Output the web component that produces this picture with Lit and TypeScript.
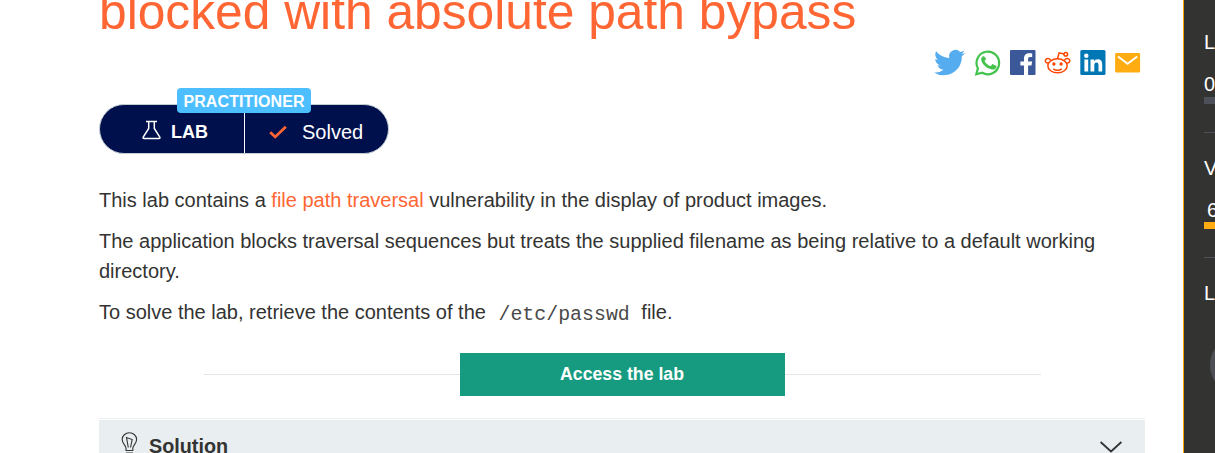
import { LitElement, html, css } from "lit";
import { customElement } from "lit/decorators.js";

@customElement("social-links")
class SocialLinks extends LitElement {
  static styles = css`
    :host { display: flex; justify-content: flex-end; gap: 9px; height: 26px; padding-right: 4px; }
    .icon { display: block; width: 26px; height: 26px; overflow: visible; }
    .bird { width: 31px; margin-right: 1px; }
  `;
  render() {
    return html`
      <svg class="icon bird" viewBox="0 0 31 26"><path fill="#55acee" d="M31 3.100c-1.100.5-2.400.8-3.600 1 1.300-.8 2.300-2 2.800-3.500-1.200.7-2.600 1.200-4 1.500A6.350 6.350 0 0 0 15.300 7.900C10 7.600 5.300 5.100 2.200 1.200c-1.700 2.900-.8 6.600 2 8.500-1 0-2-.3-2.900-.8 0 3.100 2.200 5.700 5.100 6.300-.9.300-1.900.3-2.900.1.800 2.500 3.200 4.400 6 4.400A12.800 12.800 0 0 1 0 22.400 18 18 0 0 0 9.700 25.200C21.600 25.200 28.300 15.200 27.800 6.300 29.100 5.500 30.200 4.400 31 3.100z"/></svg>
      <svg class="icon" viewBox="0 0 26 26"><path fill="none" stroke="#43c24c" stroke-width="2.200" d="M1.300 24.300l1.600-6A11.300 11.300 0 1 1 7.200 22.700z"/><path fill="#43c24c" d="M9.500 6.900c-.3-.6-.6-.6-1-.6-.9 0-2.300 1.200-2.300 3.100 0 1.500 1 3.100 1.300 3.500.3.500 2.700 4.200 6.500 5.700 3.200 1.200 3.900 1 4.600.9.700 0 2.300-.9 2.600-1.800.3-.9.300-1.600.2-1.800-.1-.2-.4-.3-.9-.5l-2.600-1.200c-.4-.1-.7-.2-.9.2l-1.200 1.500c-.2.300-.5.300-.8.100-.4-.2-1.700-.6-3.100-2-1.200-1-1.900-2.300-2.200-2.700-.2-.4 0-.6.2-.8l.6-.7c.2-.2.300-.4.400-.6.100-.3.100-.5 0-.7z"/></svg>
      <svg class="icon" viewBox="0 0 26 26"><rect width="25.500" height="25" rx="1" fill="#3b5998"/><path fill="#fff" d="M14 25V15.500h-3.600v-3.900H14V8.500c0-3.400 2.200-5.200 5.200-5.200 1.400 0 2.700.1 3 .2V7h-2.100c-1.700 0-2 .8-2 1.900v2.700h4l-.6 3.900h-3.400V25z"/></svg>
      <svg class="icon" viewBox="0 0 26 26"><g fill="none" stroke="#ff4500" stroke-width="1.500"><ellipse cx="12.500" cy="15.800" rx="9.700" ry="7"/><path d="M12.500 8.800l1.600-6 5 1.200M3.500 12.900C1.300 13.500-.2 11.500.5 9.900c1-1.900 3.800-1.800 5 .1M21.500 12.900c2.200.6 4-1.400 3.100-3-1-1.900-3.800-1.800-5 .1M8.300 18.800c2.300 1.800 6.100 1.800 8.400 0"/><circle cx="20.800" cy="4.200" r="1.800"/></g><g fill="#ff4500"><circle cx="8.900" cy="14" r="1.700"/><circle cx="16.100" cy="14" r="1.700"/></g></svg>
      <svg class="icon" viewBox="0 0 26 26"><rect width="25.200" height="25" x=".3" rx="1.500" fill="#0077b5"/><g fill="#fff"><circle cx="6.300" cy="5.800" r="2.200"/><path d="M4.400 9.500h3.800v12H4.400zM10.500 9.500h3.600v1.700c.7-1.200 1.900-2 3.600-2 3.700 0 4.500 2.300 4.500 5.600v6.700h-3.700v-5.900c0-1.500-.1-3.200-2-3.200s-2.200 1.500-2.200 3.100v6h-3.800z"/></g></svg>
      <svg class="icon" viewBox="0 0 26 26"><rect x=".1" y="3" width="25" height="19.500" rx="1.300" fill="#ffac12"/><path fill="none" stroke="#fff" stroke-width="2" d="M3 6.500l9.600 7.300 9.600-7.300"/></svg>
    `;
  }
}

@customElement("lab-status")
class LabStatus extends LitElement {
  static styles = css`
    :host { display: block; position: relative; width: 289.500px; height: 49px; color: #fff; }
    .pill { display: flex; box-sizing: border-box; height: 49.500px; border: 1px solid #c3cdd2; border-radius: 25px; background: #00104d; overflow: hidden; }
    .half { display: flex; align-items: center; }
    .lab { width: 145px; box-sizing: border-box; padding: 6px 0 0 42px; border-right: 1px solid #fff; font-size: 18px; font-weight: 700; }
    .lab svg { width: 19px; height: 20px; margin: -3px 10px 0 0; }
    .solved { padding: 6px 0 0 24px; font-size: 20px; }
    .solved svg { width: 18px; height: 14px; margin: 0 15px 0 0; }
    .level { position: absolute; left: 78px; top: -16px; width: 134px; height: 25px; border-radius: 4px; background: #4dbeff; font-size: 16px; letter-spacing: .1px; line-height: 27px; font-weight: 700; text-align: center; white-space: nowrap; }
  `;
  render() {
    return html`
      <div class="pill">
        <div class="half lab"><svg viewBox="0 0 19 20" fill="none" stroke="#fff" stroke-width="1.500"><path d="M4 1.500h11M6.700 2v6.500L1.200 17.200c-.4.700 0 1.400.8 1.400h15c.8 0 1.200-.7.800-1.400L12.300 8.500V2"/></svg>LAB</div>
        <div class="half solved"><svg viewBox="0 0 18 14" fill="none" stroke="#ff6633" stroke-width="2.800"><path d="M1.200 7.200l5 4.700L16.800 1.700"/></svg>Solved</div>
      </div>
      <span class="level">PRACTITIONER</span>
    `;
  }
}

@customElement("progress-rail")
class ProgressRail extends LitElement {
  static styles = css`
    :host { display: block; box-sizing: border-box; width: 32px; height: 453px; padding: 30px 0 0 20px; border-left: 1px solid #ffa500; background: #333332; color: #fff; font-size: 20px; line-height: 24px; overflow: hidden; }
    .block { box-sizing: border-box; height: 125px; white-space: nowrap; }
    .first { height: 126px; }
    .value { padding-top: 18px; height: 24px; }
    .inset { padding-left: 3px; }
    .bar { height: 7px; margin-top: 1px; background: #4d4f59; }
    .full { background: #ffac12; margin-top: 0; }
    .rule { height: 1px; margin-top: 28px; background: #4d4f59; }
    .badge { width: 60px; height: 60px; margin: 30px 0 0 6px; border-radius: 50%; background: #4d4f54; }
  `;
  render() {
    return html`
      <div class="block first"><div>L</div><div class="value">0</div><div class="bar"></div><div class="rule"></div></div>
      <div class="block"><div>V</div><div class="value inset">6</div><div class="bar full"></div><div class="rule"></div></div>
      <div>L</div><div class="badge"></div>
    `;
  }
}

@customElement("app-root")
class AppRoot extends LitElement {
  static styles = css`
    :host { display: flex; width: 1215px; height: 453px; overflow: hidden; background: #fff; color: #333332; font-family: "Liberation Sans", Arial, sans-serif; font-size: 20px; line-height: 30px; }
    main { width: 1183px; box-sizing: border-box; padding: 0 38px 0 99px; }
    h1 { margin: -18px 0 0; height: 68px; font-size: 49.730px; line-height: 60px; font-weight: 400; color: #ff6633; white-space: nowrap; }
    .status { margin-top: 28px; }
    p { margin: 0 0 11px; }
    .intro { margin-top: 32px; }
    a { color: #ff6633; }
    code { font-family: "Liberation Mono", monospace; padding: 0 6px 0 7px; font-size: 19.900px; line-height: 1; vertical-align: -1px; color: #4a4a49; }
    .access { display: flex; align-items: center; justify-content: center; margin: 26px 104px 0 105px; }
    .line { flex: 1; height: 1px; background: #e5e5e5; }
    .button { width: 325px; height: 43px; background: #179b80; color: #fff; font-size: 17.700px; line-height: 42px; font-weight: 700; text-align: center; }
    .right { flex: 0 0 256.500px; }
    .solution { display: flex; align-items: flex-start; box-sizing: border-box; width: 1046px; height: 50px; margin-top: 22px; padding: 10px 22px 0; background: linear-gradient(#e9eef1 1px, #fff 1px, #fff 2px, #e9eef1 2px); font-weight: 700; line-height: 36px; }
    .label { font-size: 19.800px; }
    .bulb { width: 17px; height: 25px; margin: 4px 11px 0 0; }
    .chevron { width: 22px; height: 12px; margin: 13px 1px 0 auto; }
  `;
  render() {
    return html`
      <main>
        <h1>blocked with absolute path bypass</h1>
        <social-links></social-links>
        <lab-status class="status"></lab-status>
        <p class="intro">This lab contains a <a>file path traversal</a> vulnerability in the display of product images.</p>
        <p>The application blocks traversal sequences but treats the supplied filename as being relative to a default working directory.</p>
        <p>To solve the lab, retrieve the contents of the <code>/etc/passwd</code> file.</p>
        <div class="access"><span class="line"></span><span class="button">Access the lab</span><span class="line right"></span></div>
        <div class="solution">
          <svg class="bulb" viewBox="0 0 17 25" fill="none" stroke="#333332" stroke-width="1.100"><path d="M5 18.500v-2.500C4.500 13 1.200 11.500 1.200 7.500a7.200 6.700 0 0 1 14.400 0c0 4-3.300 5.500-3.800 8.500v2.500zM7.300 15.500L5.500 5.500l5.700 2-1.700 8M5 21h7"/></svg>
          <span class="label">Solution</span>
          <svg class="chevron" viewBox="0 0 22 12" fill="none" stroke="#333332" stroke-width="1.800"><path d="M.6 1L11 10.500 21.400 1"/></svg>
        </div>
      </main>
      <progress-rail></progress-rail>
    `;
  }
}
